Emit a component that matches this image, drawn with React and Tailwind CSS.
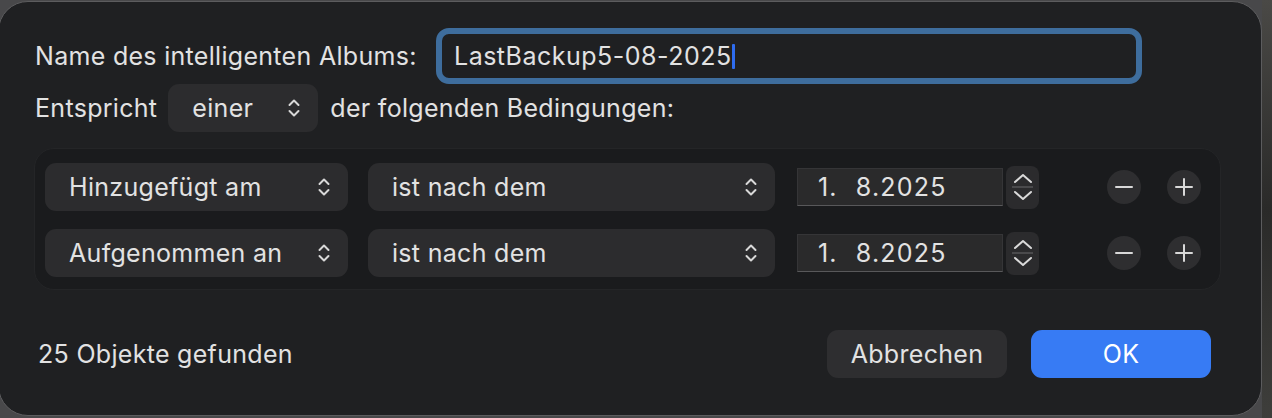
import React from "react";

const Chevrons = () => (
  <svg width="14" height="22" viewBox="0 0 14 22" fill="none" stroke="#d8d8d8" strokeWidth="2" strokeLinecap="round" strokeLinejoin="round">
    <path d="M2.5 8 L7 3.5 L11.5 8" />
    <path d="M2.5 14 L7 18.5 L11.5 14" />
  </svg>
);

const Popup = ({ label, w, textPl = "pl-[24px]" }) => (
  <div className={`${w} h-[48px] shrink-0 rounded-[11px] bg-[#2c2c2e] flex items-center justify-between ${textPl} pr-[17px]`}>
    <span>{label}</span>
    <Chevrons />
  </div>
);

const Stepper = () => (
  <div className="w-[33px] h-[43px] shrink-0 rounded-[8px] bg-[#2b2b2d] flex flex-col items-center justify-center">
    <svg width="24" height="13" viewBox="0 0 24 13" fill="none" stroke="#dadada" strokeWidth="2" strokeLinecap="round" strokeLinejoin="round">
      <path d="M4 10 L12 3 L20 10" />
    </svg>
    <div className="w-[21px] h-[2px] bg-[#4a4a4c] my-[1px]" />
    <svg width="24" height="13" viewBox="0 0 24 13" fill="none" stroke="#dadada" strokeWidth="2" strokeLinecap="round" strokeLinejoin="round">
      <path d="M4 3 L12 10 L20 3" />
    </svg>
  </div>
);

const RoundBtn = ({ plus }) => (
  <div className="w-[34px] h-[34px] shrink-0 rounded-full bg-[#2e2e30] flex items-center justify-center">
    <svg width="20" height="20" viewBox="0 0 20 20" fill="none" stroke="#d8d8d8" strokeWidth="2" strokeLinecap="round">
      <path d="M2 10 H18" />
      {plus && <path d="M10 2 V18" />}
    </svg>
  </div>
);

const ConditionRow = ({ field }) => (
  <div className="flex items-center h-[48px]">
    <Popup label={field} w="w-[303px]" />
    <div className="w-[20px] shrink-0" />
    <Popup label="ist nach dem" w="w-[407px]" />
    <div className="w-[22px] shrink-0" />
    <div className="w-[206px] h-[38px] shrink-0 bg-[#2a2a2b] border border-[#353537] border-b-[#58585a] flex items-center pl-[20px] tracking-[1.2px]">
      <span>1.</span>
      <span className="ml-[18px]">8.2025</span>
    </div>
    <div className="w-[3px] shrink-0" />
    <Stepper />
    <div className="w-[68px] shrink-0" />
    <RoundBtn />
    <div className="w-[26px] shrink-0" />
    <RoundBtn plus />
  </div>
);

export default function App() {
  return (
    <div
      className="w-[1272px] h-[418px] overflow-hidden flex bg-[#48484a] text-[#e2e2e2] text-[25px] tracking-[0.3px] leading-none"
      style={{ fontFamily: "Inter, 'Noto Sans', sans-serif" }}
    >
      <div className="shrink-0 w-[1264px] h-[415px] mt-[1px] ml-[-2px] rounded-[30px] border border-[#5c5c5e] bg-[#1f2022] flex flex-col pl-[36px] pt-[26px]">
        {/* Row 1 */}
        <div className="flex items-center h-[56px]">
          <div className="w-[401px] shrink-0">Name des intelligenten Albums:</div>
          <div className="w-[706px] h-[56px] shrink-0 rounded-[13px] border-[6px] border-[#3e6d9d] flex items-center pl-[12px]">
            <span className="tracking-[0.5px]">LastBackup5-08-2025</span>
            <span className="w-[3px] h-[25px] bg-[#2e6cf0] rounded-[1px]" />
          </div>
        </div>
        {/* Row 2 */}
        <div className="flex items-center h-[48px]">
          <span>Entspricht</span>
          <div className="w-[11px] shrink-0" />
          <Popup label="einer" w="w-[150px]" />
          <div className="w-[12px] shrink-0" />
          <span>der folgenden Bedingungen:</span>
        </div>
        {/* Conditions box */}
        <div className="mt-[16px] ml-[-1px] w-[1187px] h-[142px] rounded-[20px] bg-[#1a1b1d] border border-[#242527] flex flex-col pl-[10px] pt-[14px] gap-[18px]">
          <ConditionRow field="Hinzugefügt am" />
          <ConditionRow field="Aufgenommen an" />
        </div>
        {/* Footer */}
        <div className="mt-[40px] w-[1176px] h-[48px] flex items-center">
          <span className="ml-[3px]">25 Objekte gefunden</span>
          <div className="flex-1" />
          <div className="w-[180px] h-[48px] rounded-[11px] bg-[#2e2e30] flex items-center justify-center">Abbrechen</div>
          <div className="w-[24px]" />
          <div className="w-[180px] h-[48px] rounded-[11px] bg-[#377bf4] text-white flex items-center justify-center">OK</div>
        </div>
      </div>
      <div className="flex-1 h-full bg-gradient-to-b from-[#4a4946] via-[#2a2a29] to-[#3e3e3b]" />
    </div>
  );
}
